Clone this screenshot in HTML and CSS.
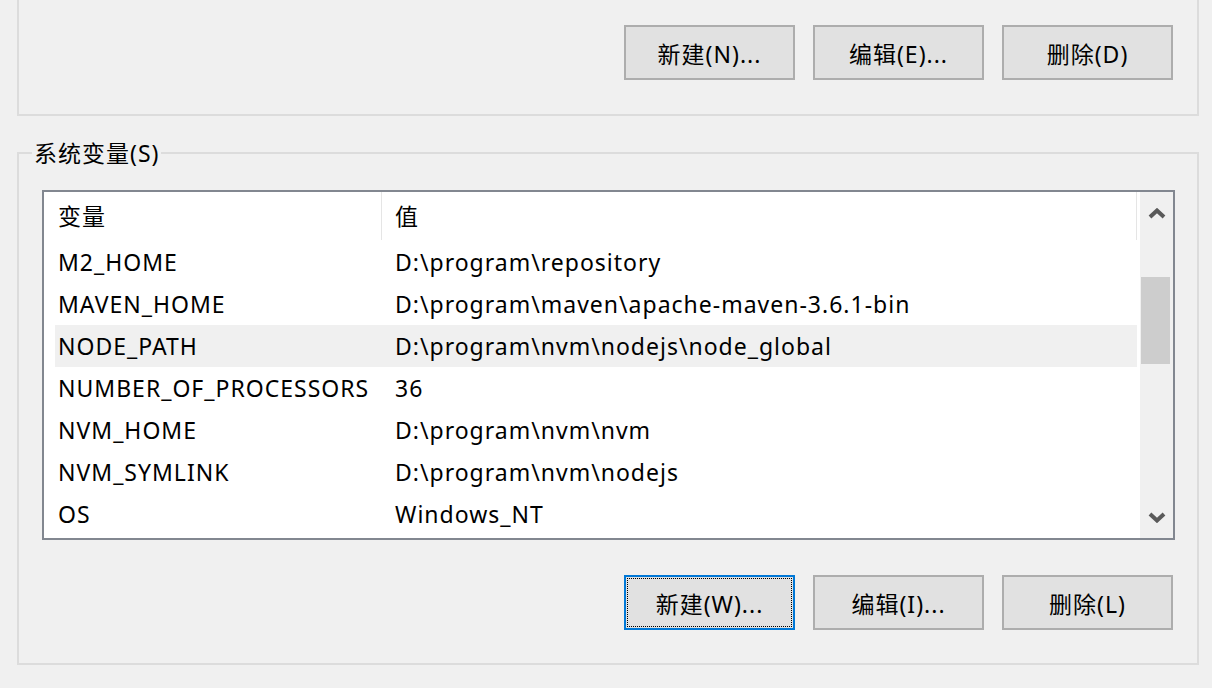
FILE: index.html
```html
<!DOCTYPE html>
<html lang="zh-CN">
<head>
<meta charset="utf-8">
<title>环境变量</title>
<link rel="stylesheet" href="styles.css">
</head>
<body>
<div class="page">
  <div class="group group-user">
    <div class="btn-row">
      <button class="btn">新建(N)...</button>
      <button class="btn">编辑(E)...</button>
      <button class="btn">删除(D)</button>
    </div>
  </div>

  <div class="group group-sys">
    <span class="group-title">系统变量(S)</span>
    <div class="listbox">
      <div class="table">
        <div class="thead">
          <div class="th th-name">变量</div>
          <div class="th th-value">值</div>
        </div>
        <div class="row"><div class="c-name">M2_HOME</div><div class="c-value">D:\program\repository</div></div>
        <div class="row"><div class="c-name">MAVEN_HOME</div><div class="c-value">D:\program\maven\apache-maven-3.6.1-bin</div></div>
        <div class="row selected"><div class="c-name">NODE_PATH</div><div class="c-value">D:\program\nvm\nodejs\node_global</div></div>
        <div class="row"><div class="c-name">NUMBER_OF_PROCESSORS</div><div class="c-value">36</div></div>
        <div class="row"><div class="c-name">NVM_HOME</div><div class="c-value">D:\program\nvm\nvm</div></div>
        <div class="row"><div class="c-name">NVM_SYMLINK</div><div class="c-value">D:\program\nvm\nodejs</div></div>
        <div class="row"><div class="c-name">OS</div><div class="c-value">Windows_NT</div></div>
      </div>
      <div class="scrollbar">
        <div class="sb-btn">
          <svg width="18" height="11" viewBox="0 0 18 11"><polyline points="2,9 9,2.5 16,9" fill="none" stroke="#5a5a5a" stroke-width="4"/></svg>
        </div>
        <div class="sb-track"><div class="sb-thumb"></div></div>
        <div class="sb-btn">
          <svg width="18" height="11" viewBox="0 0 18 11"><polyline points="2,2 9,8.5 16,2" fill="none" stroke="#5a5a5a" stroke-width="4"/></svg>
        </div>
      </div>
    </div>
    <div class="btn-row btn-row-sys">
      <button class="btn btn-focus"><span class="focus-ring">新建(W)...</span></button>
      <button class="btn">编辑(I)...</button>
      <button class="btn">删除(L)</button>
    </div>
  </div>
</div>
</body>
</html>
```

FILE: styles.css
```css
* { box-sizing: border-box; }

html, body {
  margin: 0;
  padding: 0;
  background: #f0f0f0;
  overflow: hidden;
}

body {
  width: 1212px;
  height: 688px;
  font-family: "Noto Sans", "Noto Sans CJK SC", sans-serif;
  font-size: 23px;
  letter-spacing: 1px;
  color: #000;
}

.page {
  padding-left: 17px;
  padding-right: 13px;
}

.group {
  border: 2px solid #dcdcdc;
  position: relative;
}

.group-user {
  margin-top: -20px;
  height: 136px;
  display: flex;
  flex-direction: column;
  justify-content: flex-end;
  padding-bottom: 34px;
}

.group-sys {
  margin-top: 36px;
  height: 513px;
  padding-top: 36px;
}

.group-title {
  position: absolute;
  top: -16px;
  left: 13px;
  padding: 0 2px;
  background: #f0f0f0;
  line-height: 30px;
}

.btn-row {
  display: flex;
  justify-content: flex-end;
  padding-right: 24px;
}

.btn-row-sys {
  margin-top: 35px;
}

.btn {
  width: 171px;
  height: 55px;
  margin: 0;
  margin-left: 18px;
  padding: 0;
  background: #e1e1e1;
  border: 2px solid #adadad;
  font-family: inherit;
  font-size: 23px;
  letter-spacing: 1px;
  color: #000;
  display: flex;
  align-items: center;
  justify-content: center;
}

.btn-focus {
  border-color: #0078d7;
  padding: 1px;
}

.focus-ring {
  width: 100%;
  height: 100%;
  border: 1px dotted #000;
  display: flex;
  align-items: center;
  justify-content: center;
}

.listbox {
  margin-left: 23px;
  margin-right: 22px;
  height: 350px;
  border: 2px solid #828790;
  background: #fff;
  display: flex;
  overflow: hidden;
}

.table {
  flex: 1;
  padding-left: 11px;
  padding-right: 3px;
  overflow: hidden;
}

.thead {
  display: flex;
  height: 49px;
  align-items: stretch;
}

.th {
  display: flex;
  align-items: center;
  padding-bottom: 2px;
}

.th-name {
  width: 327px;
  padding-left: 3px;
  border-right: 1px solid #e5e5e5;
  margin-bottom: 1px;
}

.th-value {
  flex: 1;
  padding-left: 13px;
  border-right: 1px solid #e5e5e5;
  margin-bottom: 1px;
}

.row {
  display: flex;
  height: 42px;
  align-items: center;
  white-space: nowrap;
}

.row.selected {
  background: #f0f0f0;
}

.c-name {
  width: 327px;
  padding-left: 3px;
}

.c-value {
  flex: 1;
  padding-left: 13px;
}

.scrollbar {
  width: 33px;
  background: #f0f0f0;
  display: flex;
  flex-direction: column;
}

.sb-btn {
  height: 42px;
  display: flex;
  align-items: center;
  justify-content: center;
}

.sb-btn svg { display: block; }

.sb-track {
  flex: 1;
  padding-left: 1px;
  padding-right: 3px;
}

.sb-thumb {
  margin-top: 43px;
  height: 87px;
  background: #cdcdcd;
}
```
